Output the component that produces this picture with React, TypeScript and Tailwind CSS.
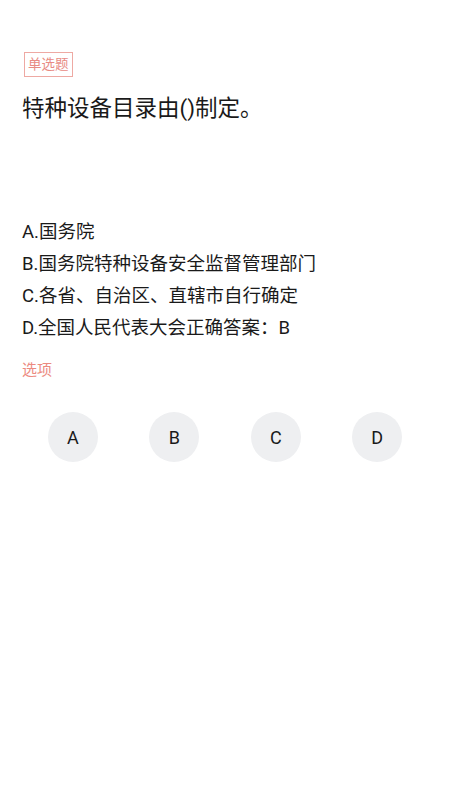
import React from "react";

export default function App() {
  const opts = [
    "A.国务院",
    "B.国务院特种设备安全监督管理部门",
    "C.各省、自治区、直辖市自行确定",
    "D.全国人民代表大会正确答案：B",
  ];
  return (
    <div
      className="w-[450px] h-[800px] bg-white text-[#1a1a1a] px-[22px]"
      style={{ fontFamily: "Roboto, 'Noto Sans CJK SC', sans-serif" }}
    >
      <div className="pt-[52px] pl-[2px]">
        <span className="inline-block border-[1.5px] border-[#eea9a3] text-[#e88b84] text-[13.5px] leading-[23px] px-[3px]">
          单选题
        </span>
      </div>
      <div className="mt-[15px] text-[22.5px] leading-[32px]">特种设备目录由()制定。</div>
      <div className="mt-[92px] flex flex-col text-[18.5px] leading-[32px]">
        {opts.map((o) => (
          <div key={o}>{o}</div>
        ))}
      </div>
      <div className="mt-[15px] text-[15px] leading-[22px] text-[#ec8a80]">选项</div>
      <div className="mt-[31px] grid grid-cols-4">
        {["A", "B", "C", "D"].map((l) => (
          <div key={l} className="flex justify-center">
            <div className="w-[50px] h-[50px] rounded-full bg-[#eeeff1] flex items-center justify-center text-[18px] text-[#1a1a1a]">
              {l}
            </div>
          </div>
        ))}
      </div>
    </div>
  );
}
